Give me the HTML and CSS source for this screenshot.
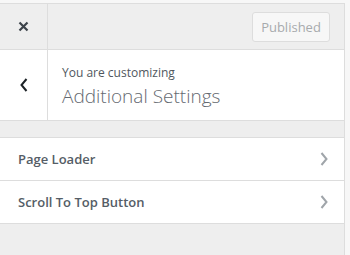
FILE: index.html
```html
<!DOCTYPE html>
<html lang="en">
<head>
  <meta charset="UTF-8">
  <title>Customizer</title>
  <link rel="stylesheet" href="styles.css">
</head>
<body>

<div class="panel">
  <div class="header">
    <div class="close">
      <svg width="11" height="11" viewBox="0 0 11 11"><path d="M1.5 1.5 L9.5 9.5 M9.5 1.5 L1.5 9.5" stroke="#3c434a" stroke-width="2.2" fill="none"/></svg>
    </div>
    <div class="actions">
      <button class="published" disabled>Published</button>
    </div>
  </div>

  <div class="info">
    <div class="back">
      <svg width="8" height="14" viewBox="0 0 8 14"><path d="M6.5 1 L1.5 7 L6.5 13" stroke="#1d2327" stroke-width="2" fill="none"/></svg>
    </div>
    <div class="title">
      <span class="sub">You are customizing</span>
      <span class="name">Additional Settings</span>
    </div>
  </div>

  <ul class="sections">
    <li>Page Loader
      <svg width="8" height="14" viewBox="0 0 8 14"><path d="M1.5 1 L6.5 7 L1.5 13" stroke="#a0a5aa" stroke-width="2" fill="none"/></svg>
    </li>
    <li>Scroll To Top Button
      <svg width="8" height="14" viewBox="0 0 8 14"><path d="M1.5 1 L6.5 7 L1.5 13" stroke="#a0a5aa" stroke-width="2" fill="none"/></svg>
    </li>
  </ul>
</div>

</body>
</html>
```

FILE: styles.css
```css
    body {
      font-family: 'Open Sans', 'Noto Sans', sans-serif;
      margin: 0;
      background-color: #f7f7f7;
      color: #50575e;
    }
    .panel {
      width: 344px;
      height: 252px;
      margin-top: 3px;
      background-color: #eee;
      border-top: 1px solid #ddd;
      border-right: 1px solid #ddd;
    }
    .header {
      display: flex;
      height: 45px;
      border-bottom: 1px solid #ddd;
    }
    .close {
      width: 47px;
      border-right: 1px solid #ddd;
      display: flex;
      justify-content: center;
      align-items: center;
    }
    .actions {
      flex: 1;
      display: flex;
      justify-content: flex-end;
      align-items: center;
      padding-right: 14px;
    }
    .published {
      width: 78px;
      height: 30px;
      background-color: #f7f7f7;
      border: 1px solid #ddd;
      border-radius: 3px;
      color: #a7aaad;
      font-family: inherit;
      font-size: 13px;
      padding: 0;
    }
    .info {
      display: flex;
      height: 70px;
      background-color: #fff;
      border-bottom: 1px solid #ddd;
    }
    .back {
      width: 47px;
      border-right: 1px solid #ddd;
      display: flex;
      justify-content: center;
      align-items: center;
    }
    .title {
      display: flex;
      flex-direction: column;
      justify-content: center;
      padding: 3px 0 0 14px;
    }
    .sub {
      font-size: 12px;
      color: #50575e;
      line-height: 18px;
    }
    .name {
      font-size: 19px;
      font-weight: 300;
      color: #646970;
      line-height: 28px;
    }
    .sections {
      list-style: none;
      margin: 16px 0 0;
      padding: 0;
      border-top: 1px solid #ddd;
    }
    .sections li {
      display: flex;
      justify-content: space-between;
      align-items: center;
      height: 42px;
      padding: 0 16px 0 18px;
      background-color: #fff;
      border-bottom: 1px solid #ddd;
      font-size: 13px;
      font-weight: 600;
      color: #555d66;
    }
```
